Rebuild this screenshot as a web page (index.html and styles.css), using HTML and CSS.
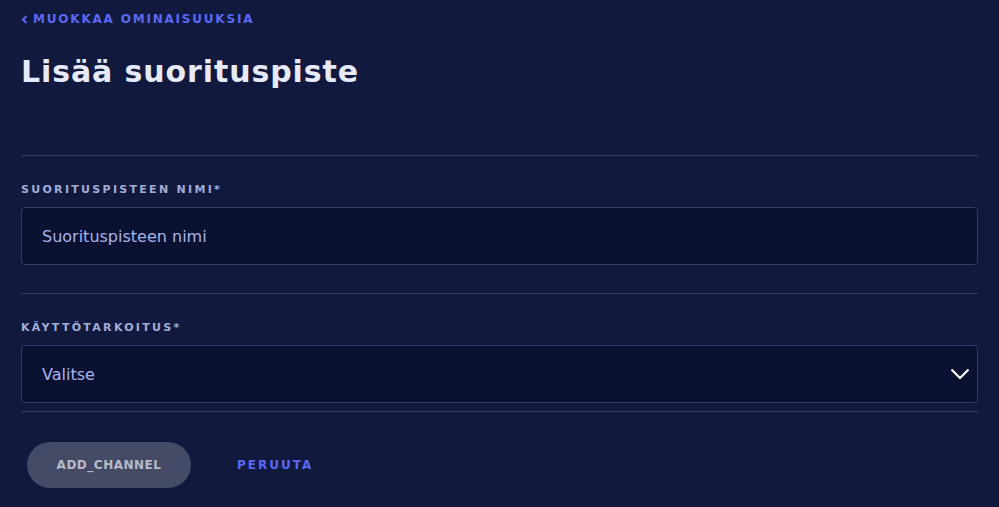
FILE: index.html
```html
<!DOCTYPE html>
<html lang="fi">
<head>
    <meta charset="UTF-8">
    <meta name="viewport" content="width=device-width, initial-scale=1.0">
    <title>Lisää suorituspiste</title>
    <link rel="stylesheet" href="styles.css">
</head>
<body>
    <div class="page">
        <a class="back" href="#">
            <svg class="back-icon" width="7" height="9" viewBox="0 0 7 9"><path d="M5.5 1 L2 4.5 L5.5 8" fill="none" stroke="currentColor" stroke-width="2"/></svg>
            MUOKKAA OMINAISUUKSIA
        </a>
        <h1 class="title">Lisää suorituspiste</h1>

        <form class="form">
            <div class="field">
                <label class="label" for="name">SUORITUSPISTEEN NIMI*</label>
                <input class="input" type="text" id="name" placeholder="Suorituspisteen nimi">
            </div>
            <div class="field field-last">
                <label class="label" for="purpose">KÄYTTÖTARKOITUS*</label>
                <div class="select">
                    <span>Valitse</span>
                    <svg width="20" height="12" viewBox="0 0 20 12"><path d="M1.5 1.5 L10 10 L18.5 1.5" fill="none" stroke="#fff" stroke-width="2.2"/></svg>
                </div>
            </div>
            <div class="actions">
                <button type="button" class="btn-primary">ADD_CHANNEL</button>
                <button type="button" class="btn-link">PERUUTA</button>
            </div>
        </form>
    </div>
</body>
</html>
```

FILE: styles.css
```css
body {
    margin: 0;
    background-color: #111a3e;
    font-family: "DejaVu Sans", sans-serif;
    color: #fff;
}

.page {
    padding: 12px 21px 0 21px;
}

.back {
    display: flex;
    align-items: center;
    gap: 5px;
    color: #5b68f6;
    text-decoration: none;
    font-size: 12px;
    font-weight: bold;
    letter-spacing: 1.8px;
}

.title {
    margin: 28px 0 0 0;
    font-size: 30px;
    line-height: 35px;
    font-weight: bold;
    letter-spacing: 0.9px;
    color: #e6e9f8;
}

.form {
    margin-top: 66px;
}

.field {
    border-top: 1px solid #323c6c;
    padding: 27px 0 28px 0;
}

.field-last {
    padding-bottom: 8px;
}

.label {
    display: block;
    font-size: 11px;
    font-weight: bold;
    letter-spacing: 2.3px;
    color: #a4acd6;
    margin-bottom: 11px;
}

.input, .select {
    box-sizing: border-box;
    width: 100%;
    height: 58px;
    padding: 0 20px;
    background-color: #0b1130;
    border: 1px solid #323c6c;
    border-radius: 4px;
    font-family: inherit;
    font-size: 16px;
    color: #a8b4ec;
}

.input::placeholder {
    color: #a8b4ec;
}

.select {
    display: flex;
    align-items: center;
    justify-content: space-between;
    padding-right: 7px;
}

.actions {
    border-top: 1px solid #323c6c;
    display: flex;
    align-items: center;
    gap: 46px;
    padding: 30px 0 0 6px;
}

.btn-primary {
    width: 164px;
    height: 46px;
    border: none;
    border-radius: 23px;
    background-color: #454a66;
    color: #b8bbc9;
    font-family: inherit;
    font-size: 12px;
    font-weight: bold;
    letter-spacing: 0.5px;
}

.btn-link {
    border: none;
    background: none;
    padding: 0;
    color: #5b68f6;
    font-family: inherit;
    font-size: 12px;
    font-weight: bold;
    letter-spacing: 2px;
}
```
